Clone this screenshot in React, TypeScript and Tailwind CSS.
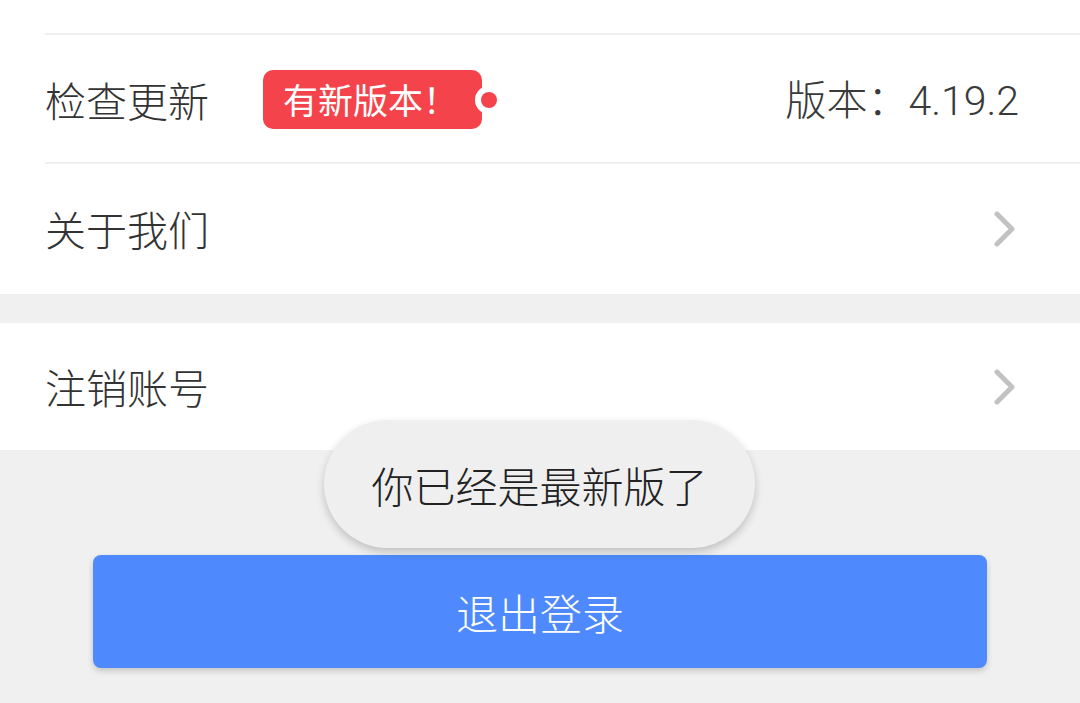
import React from 'react';

const font = { fontFamily: '"Noto Sans CJK SC", "Noto Sans", sans-serif' };

function Chevron() {
    return (
        <svg width="24" height="36" viewBox="0 0 24 36" className="text-[#c2c2c2]">
            <path d="M4 3 L19 18 L4 33" fill="none" stroke="currentColor" strokeWidth="5" strokeLinecap="round" strokeLinejoin="round"/>
        </svg>
    );
}

function Badge() {
    return (
        <div className="relative ml-[54px] flex h-[59px] items-center rounded-[10px] bg-[#f4434a] pl-[20px] pr-[24px] text-[35px] font-normal text-white">
            有新版本！
            <div className="absolute right-[-21px] top-1/2 h-[28px] w-[28px] -translate-y-1/2 rounded-full bg-white"/>
            <div className="absolute right-[-15px] top-1/2 h-[16px] w-[16px] -translate-y-1/2 rounded-full bg-[#f4434a]"/>
        </div>
    );
}

export default function App() {
    return (
        <div className="relative flex h-[703px] w-[1080px] flex-col overflow-hidden bg-[#f0f0f0] font-light text-[#333]" style={font}>

            <div className="flex flex-col bg-white pl-[45px]">
                <div className="h-[33px]"/>
                <div className="flex h-[129px] items-center border-t-2 border-[#efefef] pr-[61px] pt-[2px]">
                    <span className="text-[41px]">检查更新</span>
                    <Badge/>
                    <span className="ml-auto text-[41px] text-[#3a3a3a]">版本：<span style={{ fontFamily: 'Roboto, sans-serif' }}>4.19.2</span></span>
                </div>
                <div className="flex h-[132px] items-center justify-between border-t-2 border-[#efefef] pr-[63px]">
                    <span className="text-[41px]">关于我们</span>
                    <Chevron/>
                </div>
            </div>

            <div className="mt-[29px] flex h-[127px] items-center justify-between bg-white pl-[45px] pr-[63px]">
                <span className="text-[41px]">注销账号</span>
                <Chevron/>
            </div>

            <div className="mx-[93px] mt-[105px] flex h-[113px] items-center justify-center rounded-[8px] bg-[#4e8afd] text-[42px] text-white shadow-[0_3px_6px_rgba(0,0,0,0.18)]">
                退出登录
            </div>

            <div className="absolute left-[324px] top-[420px] flex h-[128px] w-[431px] items-center justify-center rounded-full bg-[#efeff0] text-[42px] text-[#222] shadow-[0_4px_8px_rgba(0,0,0,0.2)]">
                你已经是最新版了
            </div>
        </div>
    );
}
